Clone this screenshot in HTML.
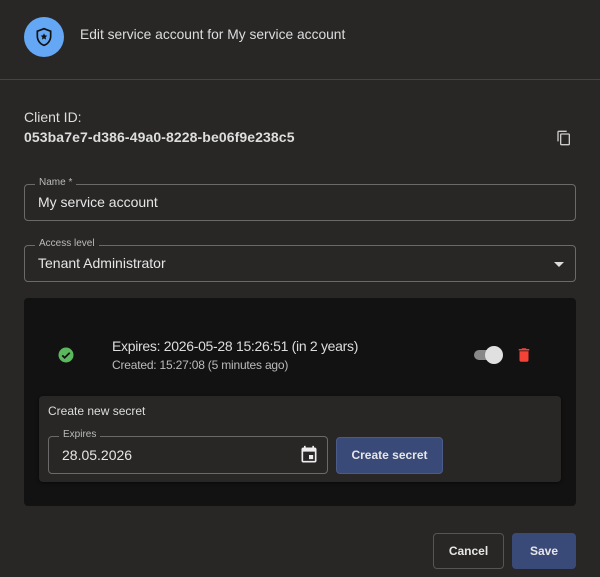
<!DOCTYPE html>
<html><head><style>
*{box-sizing:border-box;margin:0;padding:0}
body{width:600px;height:577px;background:#282726;font-family:"Liberation Sans",sans-serif;color:#e6e6e6;position:relative;overflow:hidden}
.abs{position:absolute}
.field{position:absolute;border:1px solid #6a6a6a;border-radius:4px}
.lbl{position:absolute;top:-8px;left:10px;background:#282726;padding:0 4px;font-size:10px;color:#bbb}
</style></head><body>
<div class="abs" style="left:24px;top:17px;width:40px;height:40px;border-radius:50%;background:#64a8f5"></div>
<svg class="abs" style="left:34px;top:27px" width="20" height="20" viewBox="0 0 24 24"><path d="M12 2L4 5v6c0 5 3.4 9.7 8 11 4.6-1.3 8-6 8-11V5z" fill="none" stroke="#111" stroke-width="2"/><path d="M12 7.5l1.2 2.6 2.8.3-2.1 1.9.6 2.8L12 13.7l-2.5 1.4.6-2.8L8 10.4l2.8-.3z" fill="#111"/></svg>
<div class="abs" style="left:80px;top:27px;font-size:13.8px;color:#ddd">Edit service account for My service account</div>
<div class="abs" style="left:0;top:79px;width:600px;height:1px;background:#444"></div>
<div class="abs" style="left:24px;top:109px;font-size:14px;color:#ddd">Client ID:</div>
<div class="abs" style="left:24px;top:129px;font-size:14px;font-weight:bold;color:#ddd;letter-spacing:0.1px">053ba7e7-d386-49a0-8228-be06f9e238c5</div>
<svg class="abs" style="left:556px;top:130px" width="16" height="16" viewBox="0 0 24 24"><path d="M16 1H4c-1.1 0-2 .9-2 2v14h2V3h12zm3 4H8c-1.1 0-2 .9-2 2v14c0 1.1.9 2 2 2h11c1.1 0 2-.9 2-2V7c0-1.1-.9-2-2-2zm0 16H8V7h11z" fill="#ccc"/></svg>
<div class="field" style="left:24px;top:184px;width:552px;height:37px"><span class="lbl">Name *</span><span class="abs" style="left:13px;top:9px;font-size:14px">My service account</span></div>
<div class="field" style="left:24px;top:245px;width:552px;height:37px"><span class="lbl">Access level</span><span class="abs" style="left:13px;top:9px;font-size:14px">Tenant Administrator</span><span class="abs" style="right:11px;top:16px;border:5px solid transparent;border-top-color:#ddd;border-bottom:0"></span></div>
<div class="abs" style="left:24px;top:298px;width:552px;height:208px;background:#121212;border-radius:4px"></div>
<svg class="abs" style="left:57px;top:346px" width="18" height="18" viewBox="0 0 24 24"><circle cx="12" cy="12" r="10" fill="#5cb85c"/><path d="M7 12.5l3.2 3.2L17 9" fill="none" stroke="#121212" stroke-width="2.4"/></svg>
<div class="abs" style="left:112px;top:338px;font-size:14px;color:#ddd;letter-spacing:-0.3px">Expires: 2026-05-28 15:26:51 (in 2 years)</div>
<div class="abs" style="left:112px;top:358px;font-size:12px;color:#bbb;letter-spacing:-0.2px">Created: 15:27:08 (5 minutes ago)</div>
<div class="abs" style="left:474px;top:350px;width:26px;height:10px;border-radius:5px;background:#888"></div>
<div class="abs" style="left:485px;top:346px;width:18px;height:18px;border-radius:50%;background:#e0e0e0"></div>
<svg class="abs" style="left:515px;top:346px" width="18" height="18" viewBox="0 0 24 24"><path d="M6 19c0 1.1.9 2 2 2h8c1.1 0 2-.9 2-2V7H6zM19 4h-3.5l-1-1h-5l-1 1H5v2h14z" fill="#f44336"/></svg>
<div class="abs" style="left:39px;top:396px;width:522px;height:86px;background:#282726;border-radius:4px;box-shadow:0 1px 3px rgba(0,0,0,.5)"></div>
<div class="abs" style="left:48px;top:404px;font-size:12px;color:#ddd">Create new secret</div>
<div class="field" style="left:48px;top:436px;width:280px;height:38px"><span class="lbl">Expires</span><span class="abs" style="left:13px;top:10px;font-size:14px">28.05.2026</span>
<svg class="abs" style="left:250px;top:8px" width="20" height="20" viewBox="0 0 24 24"><path d="M17 12h-5v5h5zM16 1v2H8V1H6v2H5c-1.1 0-2 .9-2 2v14c0 1.1.9 2 2 2h14c1.1 0 2-.9 2-2V5c0-1.1-.9-2-2-2h-1V1zm3 18H5V8h14z" fill="#eee"/></svg></div>
<div class="abs" style="left:336px;top:437px;width:107px;height:37px;background:#3a4a78;border:1px solid #4c5c8a;border-radius:4px;font-size:12px;font-weight:bold;text-align:center;line-height:35px">Create secret</div>
<div class="abs" style="left:433px;top:533px;width:71px;height:36px;border:1px solid #555;border-radius:4px;font-size:12px;font-weight:bold;text-align:center;line-height:34px">Cancel</div>
<div class="abs" style="left:512px;top:533px;width:64px;height:36px;background:#3a4a78;border-radius:4px;font-size:12px;font-weight:bold;text-align:center;line-height:36px">Save</div>
</body></html>
